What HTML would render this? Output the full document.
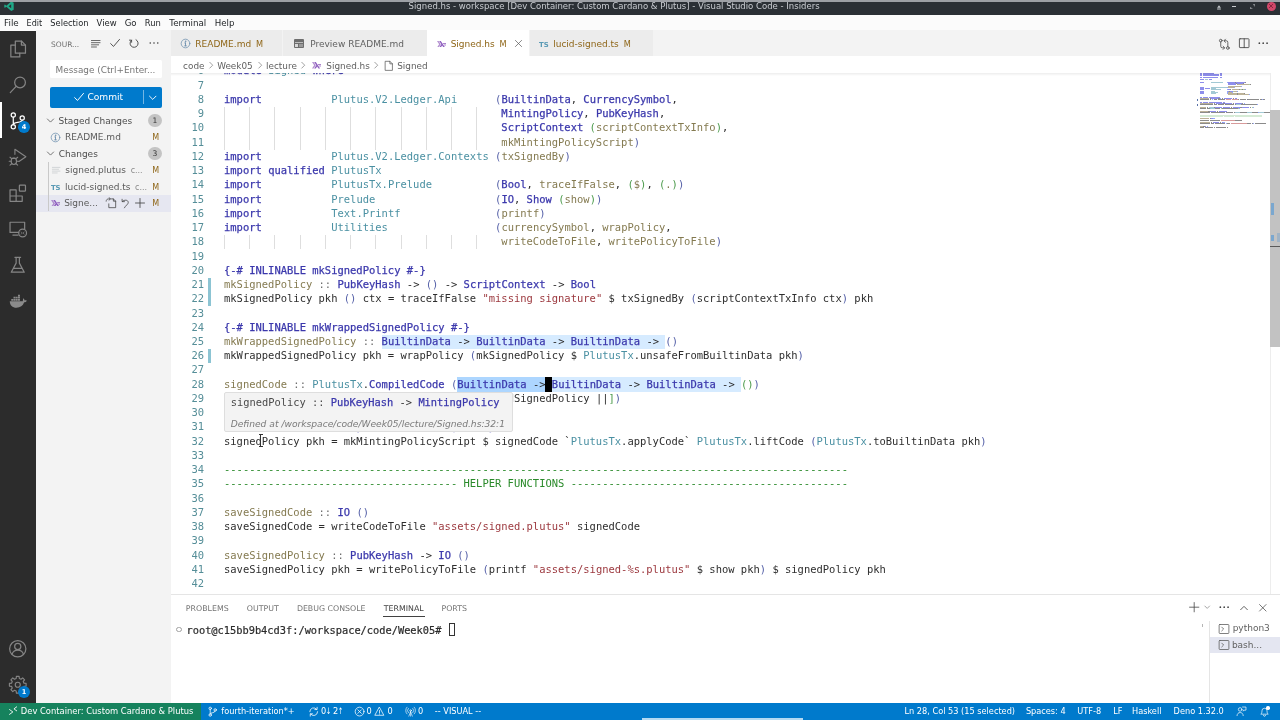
<!DOCTYPE html>
<html lang="en">
<head>
<meta charset="utf-8">
<title>Signed.hs - workspace [Dev Container: Custom Cardano &amp; Plutus] - Visual Studio Code - Insiders</title>
<style>
*{box-sizing:border-box;margin:0;padding:0}
html,body{width:1280px;height:720px;overflow:hidden;background:#fff}
body{will-change:transform;position:relative;font-family:"DejaVu Sans","Liberation Sans",sans-serif;font-size:9px;color:#616161}
.abs{position:absolute}
.t{position:absolute;line-height:20px;height:20px;white-space:pre}
#frame{left:0;top:0;width:1280px;height:1.9px;background:#9da0a5}
#title{left:0;top:2px;width:1280px;height:12.6px;background:#2b3035;color:#c9ccd1;font-size:9.3px;line-height:12px;text-align:center;white-space:nowrap}
#menu{left:0;top:14.6px;width:1280px;height:16px;background:#fbfbfb;color:#232629;font-size:9.6px;line-height:16px;white-space:nowrap}
#act{left:0;top:30.8px;width:36px;height:671.9px;background:#2c2c2c}
#side{left:36px;top:30.4px;width:135px;height:672.3px;background:#f3f3f3}
#tabs{left:171px;top:30.4px;width:1109px;height:25.3px;background:#f3f3f3}
#bc{left:171px;top:55.7px;width:1109px;height:17px;background:#fff;font-size:9.3px;line-height:19px;color:#616161;white-space:nowrap}
#ed{left:171px;top:72.7px;width:1109px;height:521.5px;background:#fff;overflow:hidden}
#edin{position:absolute;left:-171px;top:-72.7px;width:1280px;height:720px}
.cl,.ln{position:absolute;font-family:"DejaVu Sans Mono","Liberation Mono",monospace;font-size:10.470px;line-height:14.242px;height:14.242px;white-space:pre;color:#2e2e2e}
.cl{left:224px}
.ln{left:171px;width:33px;text-align:right;color:#558e98}
.k{color:#3b38ac;-webkit-text-stroke:0.25px #3b38ac}.m{color:#4a90a2}.f{color:#847a50}.s{color:#9c383e}.d{color:#6e6e6e}.c{color:#2a8a2a}
.b1{color:#5560a8}.b2{color:#4a9a4a}.b3{color:#7b3814}.o{color:#2a2a2a}
.ig{position:absolute;width:1px;background:#dedede}
.sel{position:absolute;background:#add6ff}
.selh{position:absolute;background:#d6ebff}
.cur{position:absolute;background:#000}
#panel{left:171px;top:594px;width:1109px;height:108px;background:#fff;border-top:1px solid #e5e5e5}
#status{left:0;top:702.7px;width:1280px;height:17.3px;background:#007acc;color:#fff;font-size:9px;line-height:18px;white-space:nowrap}
#remote{left:0;top:0;width:201px;height:17.3px;background:#16825d}
#mm i{position:absolute;height:1.0px;opacity:.85}
</style>
</head>
<body>
<div id="title" class="abs"><span class="t" style="left:408.60px;top:-6.24px;font-size:8.53px;color:#c9ccd1;">Signed.hs - workspace [Dev Container: Custom Cardano &amp; Plutus] - Visual Studio Code - Insiders</span></div>
<div id="menu" class="abs"><span class="t" style="left:4.10px;top:-1.44px;font-size:8.78px;color:#232629;">File</span>
<span class="t" style="left:26.60px;top:-0.44px;font-size:8.06px;color:#232629;">Edit</span>
<span class="t" style="left:50.30px;top:-1.44px;font-size:8.29px;color:#232629;">Selection</span>
<span class="t" style="left:96.60px;top:-1.44px;font-size:8.47px;color:#232629;">View</span>
<span class="t" style="left:124.70px;top:-1.44px;font-size:8.58px;color:#232629;">Go</span>
<span class="t" style="left:144.80px;top:-1.44px;font-size:8.40px;color:#232629;">Run</span>
<span class="t" style="left:169.30px;top:-1.44px;font-size:8.76px;color:#232629;">Terminal</span>
<span class="t" style="left:214.70px;top:-1.44px;font-size:8.64px;color:#232629;">Help</span></div>
<div id="act" class="abs"><!--ACT--></div>
<div id="side" class="abs"><span class="t" style="left:15.00px;top:4.64px;font-size:7.51px;color:#6f6f6f;">SOUR...</span>
<div class="abs" style="left:14.40px;top:29.70px;width:111.70px;height:18.10px;background:#ffffff;border-radius:1.5px"></div>
<span class="t" style="left:19.52px;top:29.16px;font-size:8.90px;color:#767676;">Message (Ctrl+Enter...</span>
<div class="abs" style="left:14.20px;top:56.70px;width:111.90px;height:20.60px;background:#007acc;border-radius:2px"></div>
<div class="abs" style="left:106.60px;top:60.10px;width:0.80px;height:14.00px;background:rgba(255,255,255,.45);"></div>
<span class="t" style="left:51.38px;top:56.96px;font-size:9.10px;color:#ffffff;">Commit</span>
<div class="abs" style="left:0.00px;top:164.60px;width:135.00px;height:16.70px;background:#e6e7f1;"></div>
<div class="abs" style="left:12.20px;top:131.60px;width:0.80px;height:49.50px;background:#c9c9c9;"></div>
<span class="t" style="left:22.59px;top:80.46px;font-size:9.00px;color:#4d4d4d;">Staged Changes</span>
<span class="t" style="left:29.04px;top:96.96px;font-size:9.00px;color:#5a5a5a;">README.md</span>
<span class="t" style="left:22.68px;top:113.46px;font-size:9.00px;color:#4d4d4d;">Changes</span>
<span class="t" style="left:29.32px;top:129.96px;font-size:9.00px;color:#5a5a5a;">signed.plutus</span>
<span class="t" style="left:94.64px;top:130.96px;font-size:8.00px;color:#8a8a8a;">c...</span>
<span class="t" style="left:28.98px;top:146.46px;font-size:9.00px;color:#5a5a5a;">lucid-signed.ts</span>
<span class="t" style="left:99.09px;top:147.46px;font-size:8.00px;color:#8a8a8a;">c...</span>
<span class="t" style="left:28.17px;top:162.96px;font-size:9.00px;color:#5a5a5a;">Signe...</span>
<span class="t" style="left:116.15px;top:97.96px;font-size:8.00px;color:#8f6618;">M</span>
<span class="t" style="left:116.15px;top:130.96px;font-size:8.00px;color:#8f6618;">M</span>
<span class="t" style="left:116.15px;top:147.46px;font-size:8.00px;color:#8f6618;">M</span>
<span class="t" style="left:116.15px;top:163.96px;font-size:8.00px;color:#8f6618;">M</span>
<div class="abs" style="left:112.25px;top:83.55px;width:13.50px;height:13.50px;background:#c4c4c4;border-radius:50%"></div>
<span class="t" style="left:116.58px;top:81.07px;font-size:7.60px;color:#333333;">1</span>
<div class="abs" style="left:112.25px;top:116.55px;width:13.50px;height:13.50px;background:#c4c4c4;border-radius:50%"></div>
<span class="t" style="left:116.58px;top:114.07px;font-size:7.60px;color:#333333;">3</span></div>
<div id="tabs" class="abs"><div class="abs" style="left:0.00px;top:0.00px;width:110.50px;height:25.30px;background:#ececec;"></div>
<div class="abs" style="left:111.50px;top:0.00px;width:144.00px;height:25.30px;background:#ececec;"></div>
<div class="abs" style="left:256.00px;top:0.00px;width:102.00px;height:25.30px;background:#ffffff;"></div>
<div class="abs" style="left:359.00px;top:0.00px;width:122.50px;height:25.30px;background:#ececec;"></div>
<span class="t" style="left:24.34px;top:3.76px;font-size:9.00px;color:#8f6618;">README.md</span>
<span class="t" style="left:85.11px;top:3.76px;font-size:8.20px;color:#8f6618;">M</span>
<span class="t" style="left:139.24px;top:3.76px;font-size:9.00px;color:#616161;">Preview README.md</span>
<span class="t" style="left:279.63px;top:3.76px;font-size:9.00px;color:#8f6618;">Signed.hs</span>
<span class="t" style="left:328.51px;top:3.76px;font-size:8.20px;color:#8f6618;">M</span>
<span class="t" style="left:382.23px;top:3.76px;font-size:9.00px;color:#8f6618;">lucid-signed.ts</span>
<span class="t" style="left:452.86px;top:3.76px;font-size:8.20px;color:#8f6618;">M</span></div>
<div id="bc" class="abs"><span class="t" style="left:12.12px;top:-0.04px;font-size:8.90px;">code</span>
<span class="t" style="left:46.15px;top:-0.04px;font-size:8.90px;">Week05</span>
<span class="t" style="left:95.04px;top:-0.04px;font-size:8.90px;">lecture</span>
<span class="t" style="left:155.33px;top:-0.04px;font-size:8.90px;">Signed.hs</span>
<span class="t" style="left:226.18px;top:-0.04px;font-size:8.90px;">Signed</span></div>
<div id="ed" class="abs"><div id="edin">
<div class="selh" style="left:381.59px;top:334.71px;width:283.66px;height:14.24px"></div>
<div class="sel" style="left:457.23px;top:377.44px;width:94.55px;height:14.24px"></div>
<div class="selh" style="left:551.78px;top:377.44px;width:189.10px;height:14.24px"></div>
<div class="cur" style="left:545.48px;top:377.44px;width:6.30px;height:14.24px"></div>
<div class="ig" style="left:224.00px;top:106.84px;height:42.73px"></div>
<div class="ig" style="left:249.21px;top:106.84px;height:42.73px"></div>
<div class="ig" style="left:274.43px;top:106.84px;height:42.73px"></div>
<div class="ig" style="left:299.64px;top:106.84px;height:42.73px"></div>
<div class="ig" style="left:324.86px;top:106.84px;height:42.73px"></div>
<div class="ig" style="left:350.07px;top:106.84px;height:42.73px"></div>
<div class="ig" style="left:375.28px;top:106.84px;height:42.73px"></div>
<div class="ig" style="left:400.50px;top:106.84px;height:42.73px"></div>
<div class="ig" style="left:425.71px;top:106.84px;height:42.73px"></div>
<div class="ig" style="left:450.93px;top:106.84px;height:42.73px"></div>
<div class="ig" style="left:476.14px;top:106.84px;height:42.73px"></div>
<div class="ig" style="left:224.00px;top:235.02px;height:14.24px"></div>
<div class="ig" style="left:249.21px;top:235.02px;height:14.24px"></div>
<div class="ig" style="left:274.43px;top:235.02px;height:14.24px"></div>
<div class="ig" style="left:299.64px;top:235.02px;height:14.24px"></div>
<div class="ig" style="left:324.86px;top:235.02px;height:14.24px"></div>
<div class="ig" style="left:350.07px;top:235.02px;height:14.24px"></div>
<div class="ig" style="left:375.28px;top:235.02px;height:14.24px"></div>
<div class="ig" style="left:400.50px;top:235.02px;height:14.24px"></div>
<div class="ig" style="left:425.71px;top:235.02px;height:14.24px"></div>
<div class="ig" style="left:450.93px;top:235.02px;height:14.24px"></div>
<div class="ig" style="left:476.14px;top:235.02px;height:14.24px"></div>
<div class="ln" style="top:62.88px">6</div>
<div class="cl" style="top:62.88px"><span class="k">module</span> <span class="m">Signed</span> <span class="k">where</span></div>
<div class="ln" style="top:77.88px">7</div>
<div class="ln" style="top:91.88px">8</div>
<div class="cl" style="top:91.88px"><span class="k">import</span>           <span class="m">Plutus.V2.Ledger.Api</span>      <span class="b1">(</span><span class="k">BuiltinData</span>, <span class="k">CurrencySymbol</span>,</div>
<div class="ln" style="top:105.88px">9</div>
<div class="cl" style="top:105.88px">                                            <span class="k">MintingPolicy</span>, <span class="k">PubKeyHash</span>,</div>
<div class="ln" style="top:119.88px">10</div>
<div class="cl" style="top:119.88px">                                            <span class="k">ScriptContext</span> <span class="b2">(</span><span class="f">scriptContextTxInfo</span><span class="b2">)</span>,</div>
<div class="ln" style="top:134.88px">11</div>
<div class="cl" style="top:134.88px">                                            <span class="f">mkMintingPolicyScript</span><span class="b1">)</span></div>
<div class="ln" style="top:148.88px">12</div>
<div class="cl" style="top:148.88px"><span class="k">import</span>           <span class="m">Plutus.V2.Ledger.Contexts</span> <span class="b1">(</span><span class="f">txSignedBy</span><span class="b1">)</span></div>
<div class="ln" style="top:162.88px">13</div>
<div class="cl" style="top:162.88px"><span class="k">import</span> <span class="k">qualified</span> <span class="m">PlutusTx</span></div>
<div class="ln" style="top:176.88px">14</div>
<div class="cl" style="top:176.88px"><span class="k">import</span>           <span class="m">PlutusTx.Prelude</span>          <span class="b1">(</span><span class="k">Bool</span>, <span class="f">traceIfFalse</span>, <span class="b2">(</span><span class="f">$</span><span class="b2">)</span>, <span class="b2">(</span><span class="f">.</span><span class="b2">)</span><span class="b1">)</span></div>
<div class="ln" style="top:191.88px">15</div>
<div class="cl" style="top:191.88px"><span class="k">import</span>           <span class="m">Prelude</span>                   <span class="b1">(</span><span class="k">IO</span>, <span class="k">Show</span> <span class="b2">(</span><span class="f">show</span><span class="b2">)</span><span class="b1">)</span></div>
<div class="ln" style="top:205.88px">16</div>
<div class="cl" style="top:205.88px"><span class="k">import</span>           <span class="m">Text.Printf</span>               <span class="b1">(</span><span class="f">printf</span><span class="b1">)</span></div>
<div class="ln" style="top:219.88px">17</div>
<div class="cl" style="top:219.88px"><span class="k">import</span>           <span class="m">Utilities</span>                 <span class="b1">(</span><span class="f">currencySymbol</span>, <span class="f">wrapPolicy</span>,</div>
<div class="ln" style="top:233.88px">18</div>
<div class="cl" style="top:233.88px">                                            <span class="f">writeCodeToFile</span>, <span class="f">writePolicyToFile</span><span class="b1">)</span></div>
<div class="ln" style="top:248.88px">19</div>
<div class="ln" style="top:262.88px">20</div>
<div class="cl" style="top:262.88px"><span class="k">{-# INLINABLE mkSignedPolicy #-}</span></div>
<div class="ln" style="top:276.88px">21</div>
<div class="cl" style="top:276.88px"><span class="f">mkSignedPolicy</span> <span class="d">::</span> <span class="k">PubKeyHash</span> <span class="o">-&gt;</span> <span class="b1">()</span> <span class="o">-&gt;</span> <span class="k">ScriptContext</span> <span class="o">-&gt;</span> <span class="k">Bool</span></div>
<div class="ln" style="top:290.88px">22</div>
<div class="cl" style="top:290.88px">mkSignedPolicy pkh <span class="b1">()</span> ctx = traceIfFalse <span class="s">&quot;missing signature&quot;</span> $ txSignedBy <span class="b1">(</span>scriptContextTxInfo ctx<span class="b1">)</span> pkh</div>
<div class="ln" style="top:305.88px">23</div>
<div class="ln" style="top:319.88px">24</div>
<div class="cl" style="top:319.88px"><span class="k">{-# INLINABLE mkWrappedSignedPolicy #-}</span></div>
<div class="ln" style="top:333.88px">25</div>
<div class="cl" style="top:333.88px"><span class="f">mkWrappedSignedPolicy</span> <span class="d">::</span> <span class="k">BuiltinData</span> <span class="o">-&gt;</span> <span class="k">BuiltinData</span> <span class="o">-&gt;</span> <span class="k">BuiltinData</span> <span class="o">-&gt;</span> <span class="b1">()</span></div>
<div class="ln" style="top:347.88px">26</div>
<div class="cl" style="top:347.88px">mkWrappedSignedPolicy pkh = wrapPolicy <span class="b1">(</span>mkSignedPolicy $ <span class="m">PlutusTx</span>.unsafeFromBuiltinData pkh<span class="b1">)</span></div>
<div class="ln" style="top:361.88px">27</div>
<div class="ln" style="top:376.88px">28</div>
<div class="cl" style="top:376.88px"><span class="f">signedCode</span> <span class="d">::</span> <span class="m">PlutusTx</span>.<span class="k">CompiledCode</span> <span class="b1">(</span><span class="k">BuiltinData</span> <span class="o">-&gt;</span> <span class="k">BuiltinData</span> <span class="o">-&gt;</span> <span class="k">BuiltinData</span> <span class="o">-&gt;</span> <span class="b2">()</span><span class="b1">)</span></div>
<div class="ln" style="top:390.88px">29</div>
<div class="cl" style="top:390.88px">signedCode = $$<span class="b1">(</span><span class="m">PlutusTx</span>.compile <span class="b2">[</span>|| mkWrappedSignedPolicy ||<span class="b2">]</span><span class="b1">)</span></div>
<div class="ln" style="top:404.88px">30</div>
<div class="ln" style="top:418.88px">31</div>
<div class="cl" style="top:418.88px"><span class="f">signedPolicy</span> <span class="d">::</span> <span class="k">PubKeyHash</span> <span class="o">-&gt;</span> <span class="k">MintingPolicy</span></div>
<div class="ln" style="top:433.88px">32</div>
<div class="cl" style="top:433.88px">signedPolicy pkh = mkMintingPolicyScript $ signedCode `<span class="m">PlutusTx</span>.applyCode` <span class="m">PlutusTx</span>.liftCode <span class="b1">(</span><span class="m">PlutusTx</span>.toBuiltinData pkh<span class="b1">)</span></div>
<div class="ln" style="top:447.88px">33</div>
<div class="ln" style="top:461.88px">34</div>
<div class="cl" style="top:461.88px"><span class="c">---------------------------------------------------------------------------------------------------</span></div>
<div class="ln" style="top:475.88px">35</div>
<div class="cl" style="top:475.88px"><span class="c">------------------------------------- HELPER FUNCTIONS --------------------------------------------</span></div>
<div class="ln" style="top:490.88px">36</div>
<div class="ln" style="top:504.88px">37</div>
<div class="cl" style="top:504.88px"><span class="f">saveSignedCode</span> <span class="d">::</span> <span class="k">IO</span> <span class="b1">()</span></div>
<div class="ln" style="top:518.88px">38</div>
<div class="cl" style="top:518.88px">saveSignedCode = writeCodeToFile <span class="s">&quot;assets/signed.plutus&quot;</span> signedCode</div>
<div class="ln" style="top:532.88px">39</div>
<div class="ln" style="top:547.88px">40</div>
<div class="cl" style="top:547.88px"><span class="f">saveSignedPolicy</span> <span class="d">::</span> <span class="k">PubKeyHash</span> <span class="o">-&gt;</span> <span class="k">IO</span> <span class="b1">()</span></div>
<div class="ln" style="top:561.88px">41</div>
<div class="cl" style="top:561.88px">saveSignedPolicy pkh = writePolicyToFile <span class="b1">(</span>printf <span class="s">&quot;assets/signed-%s.plutus&quot;</span> $ show pkh<span class="b1">)</span> $ signedPolicy pkh</div>
<div class="ln" style="top:575.88px">42</div>
<div class="abs" style="left:224.10px;top:392.30px;width:289.20px;height:40.00px;background:#f3f3f3;border:0.8px solid #dedede;border-radius:2px"></div>
<span class="t" style="left:230.70px;top:392.06px;font-size:10.39px;color:#4a4a4a;font-family:'DejaVu Sans Mono',monospace;">signedPolicy ::</span>
<span class="t" style="left:330.80px;top:392.06px;font-size:10.39px;color:#3b38ac;font-family:'DejaVu Sans Mono',monospace;-webkit-text-stroke:0.25px #3b38ac;">PubKeyHash</span>
<span class="t" style="left:399.61px;top:392.06px;font-size:10.39px;color:#333;font-family:'DejaVu Sans Mono',monospace;">-&gt;</span>
<span class="t" style="left:418.38px;top:392.06px;font-size:10.39px;color:#3b38ac;font-family:'DejaVu Sans Mono',monospace;-webkit-text-stroke:0.25px #3b38ac;">MintingPolicy</span>
<span class="t" style="left:230.70px;top:413.76px;font-size:9.14px;color:#7a7a7a;font-style:italic;">Defined at /workspace/code/Week05/lecture/Signed.hs:32:1</span>
</div></div>
<div id="mm" class="abs" style="left:1200.2px;top:72.9px;width:70px;height:70px"><i style="left:0.00px;top:0.00px;width:1.88px;background:#7a7ae8"></i><i style="left:2.51px;top:0.00px;width:5.02px;background:#7a7ae8"></i><i style="left:8.15px;top:0.00px;width:5.64px;background:#7a7ae8"></i><i style="left:19.44px;top:0.00px;width:1.88px;background:#7a7ae8"></i><i style="left:0.00px;top:1.26px;width:1.88px;background:#7a7ae8"></i><i style="left:2.51px;top:1.26px;width:5.02px;background:#7a7ae8"></i><i style="left:8.15px;top:1.26px;width:10.66px;background:#7a7ae8"></i><i style="left:19.44px;top:1.26px;width:1.88px;background:#7a7ae8"></i><i style="left:0.00px;top:2.52px;width:1.88px;background:#7a7ae8"></i><i style="left:2.51px;top:2.52px;width:5.02px;background:#7a7ae8"></i><i style="left:8.15px;top:2.52px;width:10.66px;background:#7a7ae8"></i><i style="left:19.44px;top:2.52px;width:1.88px;background:#7a7ae8"></i><i style="left:0.00px;top:3.79px;width:1.88px;background:#7a7ae8"></i><i style="left:2.51px;top:3.79px;width:5.02px;background:#7a7ae8"></i><i style="left:8.15px;top:3.79px;width:9.40px;background:#7a7ae8"></i><i style="left:19.44px;top:3.79px;width:1.88px;background:#7a7ae8"></i><i style="left:0.00px;top:6.31px;width:3.76px;background:#7a7ae8"></i><i style="left:4.39px;top:6.31px;width:3.76px;background:#93bfcc"></i><i style="left:8.78px;top:6.31px;width:3.13px;background:#7a7ae8"></i><i style="left:0.00px;top:8.83px;width:3.76px;background:#7a7ae8"></i><i style="left:10.66px;top:8.83px;width:12.54px;background:#93bfcc"></i><i style="left:26.96px;top:8.83px;width:0.63px;background:#8298fc"></i><i style="left:27.59px;top:8.83px;width:6.90px;background:#7a7ae8"></i><i style="left:34.48px;top:8.83px;width:0.63px;background:#777777"></i><i style="left:35.74px;top:8.83px;width:8.78px;background:#7a7ae8"></i><i style="left:44.52px;top:8.83px;width:0.63px;background:#777777"></i><i style="left:27.59px;top:10.10px;width:8.15px;background:#7a7ae8"></i><i style="left:35.74px;top:10.10px;width:0.63px;background:#777777"></i><i style="left:36.99px;top:10.10px;width:6.27px;background:#7a7ae8"></i><i style="left:43.26px;top:10.10px;width:0.63px;background:#777777"></i><i style="left:27.59px;top:11.36px;width:8.15px;background:#7a7ae8"></i><i style="left:36.37px;top:11.36px;width:0.63px;background:#98c998"></i><i style="left:36.99px;top:11.36px;width:11.91px;background:#b0a486"></i><i style="left:48.91px;top:11.36px;width:0.63px;background:#98c998"></i><i style="left:49.53px;top:11.36px;width:0.63px;background:#777777"></i><i style="left:27.59px;top:12.62px;width:13.17px;background:#b0a486"></i><i style="left:40.76px;top:12.62px;width:0.63px;background:#8298fc"></i><i style="left:0.00px;top:13.88px;width:3.76px;background:#7a7ae8"></i><i style="left:10.66px;top:13.88px;width:15.68px;background:#93bfcc"></i><i style="left:26.96px;top:13.88px;width:0.63px;background:#8298fc"></i><i style="left:27.59px;top:13.88px;width:6.27px;background:#b0a486"></i><i style="left:33.86px;top:13.88px;width:0.63px;background:#8298fc"></i><i style="left:0.00px;top:15.14px;width:3.76px;background:#7a7ae8"></i><i style="left:4.39px;top:15.14px;width:5.64px;background:#7a7ae8"></i><i style="left:10.66px;top:15.14px;width:5.02px;background:#93bfcc"></i><i style="left:0.00px;top:16.41px;width:3.76px;background:#7a7ae8"></i><i style="left:10.66px;top:16.41px;width:10.03px;background:#93bfcc"></i><i style="left:26.96px;top:16.41px;width:0.63px;background:#8298fc"></i><i style="left:27.59px;top:16.41px;width:2.51px;background:#7a7ae8"></i><i style="left:30.10px;top:16.41px;width:0.63px;background:#777777"></i><i style="left:31.35px;top:16.41px;width:7.52px;background:#b0a486"></i><i style="left:38.87px;top:16.41px;width:0.63px;background:#777777"></i><i style="left:40.13px;top:16.41px;width:0.63px;background:#98c998"></i><i style="left:40.76px;top:16.41px;width:0.63px;background:#b0a486"></i><i style="left:41.38px;top:16.41px;width:0.63px;background:#98c998"></i><i style="left:42.01px;top:16.41px;width:0.63px;background:#777777"></i><i style="left:43.26px;top:16.41px;width:0.63px;background:#98c998"></i><i style="left:43.89px;top:16.41px;width:0.63px;background:#b0a486"></i><i style="left:44.52px;top:16.41px;width:0.63px;background:#98c998"></i><i style="left:45.14px;top:16.41px;width:0.63px;background:#8298fc"></i><i style="left:0.00px;top:17.67px;width:3.76px;background:#7a7ae8"></i><i style="left:10.66px;top:17.67px;width:4.39px;background:#93bfcc"></i><i style="left:26.96px;top:17.67px;width:0.63px;background:#8298fc"></i><i style="left:27.59px;top:17.67px;width:1.25px;background:#7a7ae8"></i><i style="left:28.84px;top:17.67px;width:0.63px;background:#777777"></i><i style="left:30.10px;top:17.67px;width:2.51px;background:#7a7ae8"></i><i style="left:33.23px;top:17.67px;width:0.63px;background:#98c998"></i><i style="left:33.86px;top:17.67px;width:2.51px;background:#b0a486"></i><i style="left:36.37px;top:17.67px;width:0.63px;background:#98c998"></i><i style="left:36.99px;top:17.67px;width:0.63px;background:#8298fc"></i><i style="left:0.00px;top:18.93px;width:3.76px;background:#7a7ae8"></i><i style="left:10.66px;top:18.93px;width:6.90px;background:#93bfcc"></i><i style="left:26.96px;top:18.93px;width:0.63px;background:#8298fc"></i><i style="left:27.59px;top:18.93px;width:3.76px;background:#b0a486"></i><i style="left:31.35px;top:18.93px;width:0.63px;background:#8298fc"></i><i style="left:0.00px;top:20.19px;width:3.76px;background:#7a7ae8"></i><i style="left:10.66px;top:20.19px;width:5.64px;background:#93bfcc"></i><i style="left:26.96px;top:20.19px;width:0.63px;background:#8298fc"></i><i style="left:27.59px;top:20.19px;width:8.78px;background:#b0a486"></i><i style="left:36.37px;top:20.19px;width:0.63px;background:#777777"></i><i style="left:37.62px;top:20.19px;width:6.27px;background:#b0a486"></i><i style="left:43.89px;top:20.19px;width:0.63px;background:#777777"></i><i style="left:27.59px;top:21.45px;width:9.40px;background:#b0a486"></i><i style="left:36.99px;top:21.45px;width:0.63px;background:#777777"></i><i style="left:38.25px;top:21.45px;width:10.66px;background:#b0a486"></i><i style="left:48.91px;top:21.45px;width:0.63px;background:#8298fc"></i><i style="left:0.00px;top:23.98px;width:1.88px;background:#7a7ae8"></i><i style="left:2.51px;top:23.98px;width:5.64px;background:#7a7ae8"></i><i style="left:8.78px;top:23.98px;width:8.78px;background:#7a7ae8"></i><i style="left:18.18px;top:23.98px;width:1.88px;background:#7a7ae8"></i><i style="left:0.00px;top:25.24px;width:8.78px;background:#b0a486"></i><i style="left:9.40px;top:25.24px;width:1.25px;background:#777777"></i><i style="left:11.29px;top:25.24px;width:6.27px;background:#7a7ae8"></i><i style="left:18.18px;top:25.24px;width:1.25px;background:#777777"></i><i style="left:20.06px;top:25.24px;width:1.25px;background:#8298fc"></i><i style="left:21.95px;top:25.24px;width:1.25px;background:#777777"></i><i style="left:23.83px;top:25.24px;width:8.15px;background:#7a7ae8"></i><i style="left:32.60px;top:25.24px;width:1.25px;background:#777777"></i><i style="left:34.48px;top:25.24px;width:2.51px;background:#7a7ae8"></i><i style="left:0.00px;top:26.50px;width:8.78px;background:#777777"></i><i style="left:9.40px;top:26.50px;width:1.88px;background:#777777"></i><i style="left:11.91px;top:26.50px;width:1.25px;background:#8298fc"></i><i style="left:13.79px;top:26.50px;width:1.88px;background:#777777"></i><i style="left:16.30px;top:26.50px;width:0.63px;background:#777777"></i><i style="left:17.56px;top:26.50px;width:7.52px;background:#777777"></i><i style="left:25.71px;top:26.50px;width:5.02px;background:#d18a8a"></i><i style="left:31.35px;top:26.50px;width:6.27px;background:#d18a8a"></i><i style="left:38.25px;top:26.50px;width:0.63px;background:#777777"></i><i style="left:39.50px;top:26.50px;width:6.27px;background:#777777"></i><i style="left:46.40px;top:26.50px;width:0.63px;background:#8298fc"></i><i style="left:47.02px;top:26.50px;width:11.91px;background:#777777"></i><i style="left:59.56px;top:26.50px;width:1.88px;background:#777777"></i><i style="left:61.45px;top:26.50px;width:0.63px;background:#8298fc"></i><i style="left:62.70px;top:26.50px;width:1.88px;background:#777777"></i><i style="left:0.00px;top:29.03px;width:1.88px;background:#7a7ae8"></i><i style="left:2.51px;top:29.03px;width:5.64px;background:#7a7ae8"></i><i style="left:8.78px;top:29.03px;width:13.17px;background:#7a7ae8"></i><i style="left:22.57px;top:29.03px;width:1.88px;background:#7a7ae8"></i><i style="left:0.00px;top:30.29px;width:13.17px;background:#b0a486"></i><i style="left:13.79px;top:30.29px;width:1.25px;background:#777777"></i><i style="left:15.68px;top:30.29px;width:6.90px;background:#7a7ae8"></i><i style="left:23.20px;top:30.29px;width:1.25px;background:#777777"></i><i style="left:25.08px;top:30.29px;width:6.90px;background:#7a7ae8"></i><i style="left:32.60px;top:30.29px;width:1.25px;background:#777777"></i><i style="left:34.48px;top:30.29px;width:6.90px;background:#7a7ae8"></i><i style="left:42.01px;top:30.29px;width:1.25px;background:#777777"></i><i style="left:43.89px;top:30.29px;width:1.25px;background:#8298fc"></i><i style="left:0.00px;top:31.55px;width:13.17px;background:#777777"></i><i style="left:13.79px;top:31.55px;width:1.88px;background:#777777"></i><i style="left:16.30px;top:31.55px;width:0.63px;background:#777777"></i><i style="left:17.56px;top:31.55px;width:6.27px;background:#777777"></i><i style="left:24.45px;top:31.55px;width:0.63px;background:#8298fc"></i><i style="left:25.08px;top:31.55px;width:8.78px;background:#777777"></i><i style="left:34.48px;top:31.55px;width:0.63px;background:#777777"></i><i style="left:35.74px;top:31.55px;width:5.02px;background:#93bfcc"></i><i style="left:40.76px;top:31.55px;width:13.79px;background:#777777"></i><i style="left:55.18px;top:31.55px;width:1.88px;background:#777777"></i><i style="left:57.06px;top:31.55px;width:0.63px;background:#8298fc"></i><i style="left:0.00px;top:34.07px;width:6.27px;background:#b0a486"></i><i style="left:6.90px;top:34.07px;width:1.25px;background:#777777"></i><i style="left:8.78px;top:34.07px;width:5.02px;background:#93bfcc"></i><i style="left:13.79px;top:34.07px;width:0.63px;background:#777777"></i><i style="left:14.42px;top:34.07px;width:7.52px;background:#7a7ae8"></i><i style="left:22.57px;top:34.07px;width:0.63px;background:#8298fc"></i><i style="left:23.20px;top:34.07px;width:6.90px;background:#7a7ae8"></i><i style="left:30.72px;top:34.07px;width:1.25px;background:#777777"></i><i style="left:32.60px;top:34.07px;width:6.90px;background:#7a7ae8"></i><i style="left:40.13px;top:34.07px;width:1.25px;background:#777777"></i><i style="left:42.01px;top:34.07px;width:6.90px;background:#7a7ae8"></i><i style="left:49.53px;top:34.07px;width:1.25px;background:#777777"></i><i style="left:51.41px;top:34.07px;width:1.25px;background:#98c998"></i><i style="left:52.67px;top:34.07px;width:0.63px;background:#8298fc"></i><i style="left:0.00px;top:35.34px;width:6.27px;background:#777777"></i><i style="left:6.90px;top:35.34px;width:0.63px;background:#777777"></i><i style="left:8.15px;top:35.34px;width:1.25px;background:#777777"></i><i style="left:9.40px;top:35.34px;width:0.63px;background:#8298fc"></i><i style="left:10.03px;top:35.34px;width:5.02px;background:#93bfcc"></i><i style="left:15.05px;top:35.34px;width:5.02px;background:#777777"></i><i style="left:20.69px;top:35.34px;width:0.63px;background:#98c998"></i><i style="left:21.32px;top:35.34px;width:1.25px;background:#777777"></i><i style="left:23.20px;top:35.34px;width:13.17px;background:#777777"></i><i style="left:36.99px;top:35.34px;width:1.25px;background:#777777"></i><i style="left:38.25px;top:35.34px;width:0.63px;background:#98c998"></i><i style="left:38.87px;top:35.34px;width:0.63px;background:#8298fc"></i><i style="left:0.00px;top:37.86px;width:7.52px;background:#b0a486"></i><i style="left:8.15px;top:37.86px;width:1.25px;background:#777777"></i><i style="left:10.03px;top:37.86px;width:6.27px;background:#7a7ae8"></i><i style="left:16.93px;top:37.86px;width:1.25px;background:#777777"></i><i style="left:18.81px;top:37.86px;width:8.15px;background:#7a7ae8"></i><i style="left:0.00px;top:39.12px;width:7.52px;background:#777777"></i><i style="left:8.15px;top:39.12px;width:1.88px;background:#777777"></i><i style="left:10.66px;top:39.12px;width:0.63px;background:#777777"></i><i style="left:11.91px;top:39.12px;width:13.17px;background:#777777"></i><i style="left:25.71px;top:39.12px;width:0.63px;background:#777777"></i><i style="left:26.96px;top:39.12px;width:6.27px;background:#777777"></i><i style="left:33.86px;top:39.12px;width:0.63px;background:#777777"></i><i style="left:34.48px;top:39.12px;width:5.02px;background:#93bfcc"></i><i style="left:39.50px;top:39.12px;width:6.90px;background:#777777"></i><i style="left:47.02px;top:39.12px;width:5.02px;background:#93bfcc"></i><i style="left:52.04px;top:39.12px;width:5.64px;background:#777777"></i><i style="left:58.31px;top:39.12px;width:0.63px;background:#8298fc"></i><i style="left:58.94px;top:39.12px;width:5.02px;background:#93bfcc"></i><i style="left:63.95px;top:39.12px;width:8.78px;background:#777777"></i><i style="left:73.36px;top:39.12px;width:1.88px;background:#777777"></i><i style="left:75.24px;top:39.12px;width:0.63px;background:#8298fc"></i><i style="left:0.00px;top:41.65px;width:62.07px;background:#cfe8cf"></i><i style="left:0.00px;top:42.91px;width:23.20px;background:#cfe8cf"></i><i style="left:23.83px;top:42.91px;width:3.76px;background:#cfe8cf"></i><i style="left:28.21px;top:42.91px;width:5.64px;background:#cfe8cf"></i><i style="left:34.48px;top:42.91px;width:27.59px;background:#cfe8cf"></i><i style="left:0.00px;top:45.43px;width:8.78px;background:#b0a486"></i><i style="left:9.40px;top:45.43px;width:1.25px;background:#777777"></i><i style="left:11.29px;top:45.43px;width:1.25px;background:#7a7ae8"></i><i style="left:13.17px;top:45.43px;width:1.25px;background:#8298fc"></i><i style="left:0.00px;top:46.69px;width:8.78px;background:#777777"></i><i style="left:9.40px;top:46.69px;width:0.63px;background:#777777"></i><i style="left:10.66px;top:46.69px;width:9.40px;background:#777777"></i><i style="left:20.69px;top:46.69px;width:13.79px;background:#d18a8a"></i><i style="left:35.11px;top:46.69px;width:6.27px;background:#777777"></i><i style="left:0.00px;top:49.22px;width:10.03px;background:#b0a486"></i><i style="left:10.66px;top:49.22px;width:1.25px;background:#777777"></i><i style="left:12.54px;top:49.22px;width:6.27px;background:#7a7ae8"></i><i style="left:19.44px;top:49.22px;width:1.25px;background:#777777"></i><i style="left:21.32px;top:49.22px;width:1.25px;background:#7a7ae8"></i><i style="left:23.20px;top:49.22px;width:1.25px;background:#8298fc"></i><i style="left:0.00px;top:50.48px;width:10.03px;background:#777777"></i><i style="left:10.66px;top:50.48px;width:1.88px;background:#777777"></i><i style="left:13.17px;top:50.48px;width:0.63px;background:#777777"></i><i style="left:14.42px;top:50.48px;width:10.66px;background:#777777"></i><i style="left:25.71px;top:50.48px;width:0.63px;background:#8298fc"></i><i style="left:26.33px;top:50.48px;width:3.76px;background:#777777"></i><i style="left:30.72px;top:50.48px;width:15.68px;background:#d18a8a"></i><i style="left:47.02px;top:50.48px;width:0.63px;background:#777777"></i><i style="left:48.28px;top:50.48px;width:2.51px;background:#777777"></i><i style="left:51.41px;top:50.48px;width:1.88px;background:#777777"></i><i style="left:53.30px;top:50.48px;width:0.63px;background:#8298fc"></i><i style="left:54.55px;top:50.48px;width:0.63px;background:#777777"></i><i style="left:55.80px;top:50.48px;width:7.52px;background:#777777"></i><i style="left:63.95px;top:50.48px;width:1.88px;background:#777777"></i><i style="left:0.00px;top:53.00px;width:2.51px;background:#b0a486"></i><i style="left:3.13px;top:53.00px;width:1.25px;background:#777777"></i><i style="left:5.02px;top:53.00px;width:1.25px;background:#7a7ae8"></i><i style="left:6.90px;top:53.00px;width:1.25px;background:#8298fc"></i><i style="left:0.00px;top:54.27px;width:2.51px;background:#777777"></i><i style="left:3.13px;top:54.27px;width:0.63px;background:#777777"></i><i style="left:4.39px;top:54.27px;width:8.78px;background:#777777"></i><i style="left:13.79px;top:54.27px;width:1.25px;background:#777777"></i><i style="left:15.68px;top:54.27px;width:10.03px;background:#777777"></i><i style="left:26.33px;top:54.27px;width:1.88px;background:#777777"></i><i style="left:-3.2px;top:26.20px;width:1.2px;height:1.6px;background:#3d5a9a"></i><i style="left:-3.2px;top:31.25px;width:1.2px;height:1.6px;background:#3d5a9a"></i></div>
<div id="panel" class="abs"><span class="t" style="left:14.83px;top:4.26px;font-size:7.85px;color:#757575;">PROBLEMS</span>
<span class="t" style="left:75.75px;top:4.26px;font-size:7.85px;color:#757575;">OUTPUT</span>
<span class="t" style="left:125.88px;top:4.26px;font-size:7.85px;color:#757575;">DEBUG CONSOLE</span>
<span class="t" style="left:212.79px;top:4.26px;font-size:7.85px;color:#424242;">TERMINAL</span>
<span class="t" style="left:270.46px;top:4.26px;font-size:7.85px;color:#757575;">PORTS</span>
<div class="abs" style="left:212.00px;top:20.70px;width:41.50px;height:0.80px;background:#424242;"></div>
<span class="t" style="left:15.50px;top:25.06px;font-size:10.33px;color:#2a2a2a;font-family:'DejaVu Sans Mono',monospace;-webkit-text-stroke:0.2px #2a2a2a;">root@c15bb9b4cd3f:/workspace/code/Week05#</span>
<div class="abs" style="left:277.50px;top:28.30px;width:6.30px;height:12.60px;background:transparent;border:0.8px solid #333"></div>
<div class="abs" style="left:5.30px;top:31.70px;width:5.80px;height:5.80px;background:transparent;border:0.9px solid #a0a0a0;border-radius:50%"></div>
<div class="abs" style="left:1038.00px;top:26.00px;width:0.80px;height:82.00px;background:#e5e5e5;"></div>
<div class="abs" style="left:1038.80px;top:41.50px;width:70.20px;height:16.50px;background:#e4e6f1;"></div>
<span class="t" style="left:1061.65px;top:22.96px;font-size:9.00px;color:#616161;">python3</span>
<span class="t" style="left:1060.90px;top:39.56px;font-size:9.00px;color:#616161;">bash...</span></div>
<div id="status" class="abs"><div id="remote" class="abs"></div><span class="t" style="left:20.80px;top:-1.24px;font-size:8.37px;color:#ffffff;">Dev Container: Custom Cardano &amp; Plutus</span>
<span class="t" style="left:221.27px;top:-1.24px;font-size:8.20px;color:#ffffff;">fourth-iteration*+</span>
<span class="t" style="left:320.89px;top:-1.24px;font-size:8.20px;color:#ffffff;">0</span>
<span class="t" style="left:332.89px;top:-1.24px;font-size:8.20px;color:#ffffff;">2</span>
<span class="t" style="left:324.51px;top:-1.24px;font-size:8.80px;color:#ffffff;transform:scaleX(.7);">↓</span>
<span class="t" style="left:336.81px;top:-1.24px;font-size:8.80px;color:#ffffff;transform:scaleX(.7);">↑</span>
<span class="t" style="left:366.39px;top:-1.24px;font-size:8.20px;color:#ffffff;">0</span>
<span class="t" style="left:387.39px;top:-1.24px;font-size:8.20px;color:#ffffff;">0</span>
<span class="t" style="left:417.89px;top:-1.24px;font-size:8.20px;color:#ffffff;">0</span>
<span class="t" style="left:434.77px;top:-1.24px;font-size:8.20px;color:#ffffff;">-- VISUAL --</span>
<span class="t" style="left:904.48px;top:-1.24px;font-size:8.20px;color:#ffffff;">Ln 28, Col 53 (15 selected)</span>
<span class="t" style="left:1025.88px;top:-1.24px;font-size:8.20px;color:#ffffff;">Spaces: 4</span>
<span class="t" style="left:1077.35px;top:-1.24px;font-size:8.20px;color:#ffffff;">UTF-8</span>
<span class="t" style="left:1113.31px;top:-1.24px;font-size:8.20px;color:#ffffff;">LF</span>
<span class="t" style="left:1131.99px;top:-1.24px;font-size:8.20px;color:#ffffff;">Haskell</span>
<span class="t" style="left:1173.62px;top:-1.24px;font-size:8.20px;color:#ffffff;">Deno 1.32.0</span></div>
<svg class="abs" style="left:8.25px;top:38.95px;" width="19.50" height="19.50" viewBox="0 0 24 24"><g fill="none" stroke="#858585" stroke-width="1.5" stroke-linecap="round" stroke-linejoin="round" ><path d="M9 2.5h7.5l5 5V17.5H9z"/><path d="M16.5 2.5v5h5"/><path d="M9 7.5H3.5v14.5h11V17.5"/></g></svg>
<svg class="abs" style="left:8.25px;top:74.95px;" width="19.50" height="19.50" viewBox="0 0 24 24"><g fill="none" stroke="#858585" stroke-width="1.5" stroke-linecap="round" stroke-linejoin="round" ><circle cx="14.8" cy="9.2" r="6.6"/><path d="M10 14 2.8 21.6"/></g></svg>
<div class="abs" style="left:0.00px;top:102.00px;width:1.70px;height:36.30px;background:#ffffff;"></div>
<svg class="abs" style="left:8.25px;top:110.75px;" width="19.50" height="19.50" viewBox="0 0 24 24"><g fill="none" stroke="#ffffff" stroke-width="1.5" stroke-linecap="round" stroke-linejoin="round" ><circle cx="6.5" cy="5" r="2.6"/><circle cx="6.5" cy="19.5" r="2.6"/><circle cx="17.5" cy="8.5" r="2.6"/><path d="M6.5 7.6v9.3M17.5 11.1c0 4.5-11 1.5-11 5.8"/></g></svg>
<svg class="abs" style="left:8.25px;top:146.95px;" width="19.50" height="19.50" viewBox="0 0 24 24"><g fill="none" stroke="#858585" stroke-width="1.4" stroke-linecap="round" stroke-linejoin="round" ><path d="M8.5 9V2.8L22 12l-8.5 5.8"/><ellipse cx="7.2" cy="17.5" rx="3.3" ry="4"/><path d="M3.9 17.5H1.5M10.5 17.5h2.4M4.5 14.3 2.5 12.6M9.9 14.3l2-1.7M4.5 20.7l-2 1.6M9.9 20.7l2 1.6M5.4 14h3.6"/></g></svg>
<svg class="abs" style="left:8.25px;top:182.55px;" width="19.50" height="19.50" viewBox="0 0 24 24"><g fill="none" stroke="#858585" stroke-width="1.5" stroke-linecap="round" stroke-linejoin="round" ><path d="M2.5 8.5h7.5v7.5h-7.5zM2.5 16h7.5v6.5h-7.5zM10 16h7.5v6.5H10z"/><rect x="14" y="2.5" width="7.5" height="7.5" rx="0.8"/></g></svg>
<svg class="abs" style="left:8.25px;top:218.95px;" width="19.50" height="19.50" viewBox="0 0 24 24"><g fill="none" stroke="#858585" stroke-width="1.5" stroke-linecap="round" stroke-linejoin="round" ><path d="M13 16.5H2.5V4h18v8"/><path d="M6 19.8h6.5"/><circle cx="18" cy="17.3" r="4.8"/><path d="M16.3 16l1.2 1.3-1.2 1.3M19.8 16l-1.2 1.3 1.2 1.3" stroke-width="0.9"/></g></svg>
<svg class="abs" style="left:8.25px;top:254.75px;" width="19.50" height="19.50" viewBox="0 0 24 24"><g fill="none" stroke="#858585" stroke-width="1.5" stroke-linecap="round" stroke-linejoin="round" ><path d="M8.5 2.8h7M10 3v7L4 21.2h16L14 10V3M7 16.5h10"/></g></svg>
<svg class="abs" style="left:9.00px;top:292.00px;" width="18.00" height="18.00" viewBox="0 0 24 24"><g fill="#8a8a8a" stroke="none"><path d="M1 12.3h17.3c.6-1.600.2-3 .9-3.900 1 .8 1.500 1.900 1.500 3 1-.4 2.200-.3 3 .3-.7 1.500-2 2-3.500 2.100C18.500 18.700 15 21 10 21 4.500 21 1.300 17.800 1 12.300z"/><path d="M3 9.200h2.600v2.400H3zM6 9.200h2.600v2.400H6zM9 9.200h2.600v2.400H9zM12 9.200h2.600v2.400H12zM6 6.400h2.600v2.400H6zM9 6.400h2.600v2.400H9zM12 6.400h2.600v2.400H12zM12 3.600h2.600v2.400H12z"/></g></svg>
<svg class="abs" style="left:8.25px;top:638.95px;" width="19.50" height="19.50" viewBox="0 0 24 24"><g fill="none" stroke="#858585" stroke-width="1.5" stroke-linecap="round" stroke-linejoin="round" ><circle cx="12" cy="12" r="10"/><circle cx="12" cy="9.3" r="3.8"/><path d="M5 19c1-4 4-5.2 7-5.2s6 1.200 7 5.2"/></g></svg>
<svg class="abs" style="left:8.25px;top:675.15px;" width="19.50" height="19.50" viewBox="0 0 24 24"><g fill="none" stroke="#858585" stroke-width="1.4" stroke-linecap="round" stroke-linejoin="round" ><path d="M10.05 4.35 L10.34 1.73 L13.66 1.73 L13.95 4.35 L16.03 5.21 L18.09 3.57 L20.43 5.91 L18.79 7.97 L19.65 10.05 L22.27 10.34 L22.27 13.66 L19.65 13.95 L18.79 16.03 L20.43 18.09 L18.09 20.43 L16.03 18.79 L13.95 19.65 L13.66 22.27 L10.34 22.27 L10.05 19.65 L7.97 18.79 L5.91 20.43 L3.57 18.09 L5.21 16.03 L4.35 13.95 L1.73 13.66 L1.73 10.34 L4.35 10.05 L5.21 7.97 L3.57 5.91 L5.91 3.57 L7.97 5.21z"/><circle cx="12" cy="12" r="3.1"/></g></svg>
<div class="abs" style="left:18.20px;top:121.10px;width:11.60px;height:11.60px;background:#007acc;border-radius:50%"></div>
<span class="t" style="left:21.70px;top:117.41px;font-size:6.60px;color:#ffffff;font-weight:bold;">4</span>
<div class="abs" style="left:18.00px;top:685.70px;width:12.00px;height:12.00px;background:#007acc;border-radius:50%"></div>
<span class="t" style="left:21.70px;top:682.21px;font-size:6.60px;color:#ffffff;font-weight:bold;">1</span>
<svg class="abs" style="left:90.00px;top:37.50px;" width="11.50" height="11.50" viewBox="0 0 16 16"><g fill="none" stroke="#424242" stroke-width="1.1" stroke-linecap="round" stroke-linejoin="round" ><path d="M2 3.500h12M2 6.500h12M2 9.500h10M2 12.500h7"/></g></svg>
<svg class="abs" style="left:108.80px;top:37.20px;" width="12.00" height="12.00" viewBox="0 0 16 16"><g fill="none" stroke="#424242" stroke-width="1.2" stroke-linecap="round" stroke-linejoin="round" ><path d="M2.200 8.800 6 12.600 14 3.200"/></g></svg>
<svg class="abs" style="left:128.00px;top:37.20px;" width="12.00" height="12.00" viewBox="0 0 16 16"><g fill="none" stroke="#424242" stroke-width="1.2" stroke-linecap="round" stroke-linejoin="round" ><path d="M10.700 3.600A5.400 5.400 0 1 1 4.600 4.200"/><path d="M2 4.200H4.800V7"/></g></svg>
<svg color="#424242" class="abs" style="left:147.50px;top:37.40px;" width="12.00" height="12.00" viewBox="0 0 16 16"><g fill="none" stroke="#424242" stroke-width="1.2" stroke-linecap="round" stroke-linejoin="round" ><g stroke="none" fill="currentColor"><circle cx="3" cy="8" r="1.100"/><circle cx="8" cy="8" r="1.100"/><circle cx="13" cy="8" r="1.100"/></g></g></svg>
<svg class="abs" style="left:72.80px;top:91.40px;" width="12.00" height="12.00" viewBox="0 0 16 16"><g fill="none" stroke="#ffffff" stroke-width="1.3" stroke-linecap="round" stroke-linejoin="round" ><path d="M2.200 8.800 6 12.600 14 3.200"/></g></svg>
<svg class="abs" style="left:146.60px;top:92.00px;" width="11.50" height="11.50" viewBox="0 0 16 16"><g fill="none" stroke="#ffffff" stroke-width="1.3" stroke-linecap="round" stroke-linejoin="round" ><path d="M3.500 5.800 8 10.300 12.500 5.800"/></g></svg>
<svg class="abs" style="left:45.40px;top:115.10px;" width="11.00" height="11.00" viewBox="0 0 16 16"><g fill="none" stroke="#5a5a5a" stroke-width="1.2" stroke-linecap="round" stroke-linejoin="round" ><path d="M3.500 5.800 8 10.300 12.500 5.800"/></g></svg>
<svg class="abs" style="left:45.40px;top:148.10px;" width="11.00" height="11.00" viewBox="0 0 16 16"><g fill="none" stroke="#5a5a5a" stroke-width="1.2" stroke-linecap="round" stroke-linejoin="round" ><path d="M3.500 5.800 8 10.300 12.500 5.800"/></g></svg>
<svg color="#6d8fae" class="abs" style="left:49.60px;top:131.60px;" width="11.00" height="11.00" viewBox="0 0 16 16"><g fill="none" stroke="#6d8fae" stroke-width="1.1" stroke-linecap="round" stroke-linejoin="round" ><circle cx="8" cy="8" r="6.300"/><path d="M8 7.200v4.200M6.800 11.400h2.400M7 7.200h1" stroke-width="1.300"/><circle cx="8" cy="4.700" r="0.500" fill="currentColor"/></g></svg>
<svg class="abs" style="left:50.60px;top:164.70px;" width="11.00" height="11.00" viewBox="0 0 16 16"><g fill="none" stroke="#c3c7cb" stroke-width="1.0" stroke-linecap="round" stroke-linejoin="round" ><path d="M2 3.500h11M2 6.200h9M2 8.900h11M2 11.600h7"/></g></svg>
<span class="t" style="left:50.91px;top:177.86px;font-size:6.90px;color:#5a9ab5;font-weight:bold;">TS</span>
<svg class="abs" style="left:50.50px;top:199.60px;" width="9.70" height="6.85" viewBox="0 0 17 12"><g stroke="none"><path d="M0 12 4 6 0 0h3l4 6-4 6z" fill="#a074c4" opacity=".8"/><path d="M4 12 8 6 4 0h3l8 12h-3l-2.500-3.750L7 12z" fill="#8f5fc0"/><path d="M13.670 8.500 12.330 6.500H17v2zM11.670 5.500 10.330 3.500H17v2z" fill="#a074c4" opacity=".9"/></g></svg>
<svg class="abs" style="left:104.80px;top:197.00px;" width="12.20" height="12.20" viewBox="0 0 16 16"><g fill="none" stroke="#424242" stroke-width="1.0" stroke-linecap="round" stroke-linejoin="round" ><path d="M8.500 2.500h2.500l3 3v8.500H5V9"/><path d="M11 2.500v3h3"/><path d="M1.500 5.500C1.500 3.500 3 2.500 5 2.500h2M5.300 0.800 7.200 2.500 5.300 4.200"/></g></svg>
<svg class="abs" style="left:119.80px;top:197.50px;" width="11.20" height="11.20" viewBox="0 0 16 16"><g fill="none" stroke="#424242" stroke-width="1.1" stroke-linecap="round" stroke-linejoin="round" ><path d="M3.500 4.800C6 2.300 11.500 2.300 11.800 6.200 12 9 8 10.500 6.300 14"/><path d="M3 1.800V5.200H6.400"/></g></svg>
<svg class="abs" style="left:134.00px;top:197.20px;" width="12.00" height="12.00" viewBox="0 0 16 16"><g fill="none" stroke="#424242" stroke-width="1.1" stroke-linecap="round" stroke-linejoin="round" ><path d="M8 2v12M2 8h12"/></g></svg>
<svg color="#6d8fae" class="abs" style="left:180.00px;top:38.40px;" width="11.00" height="11.00" viewBox="0 0 16 16"><g fill="none" stroke="#6d8fae" stroke-width="1.1" stroke-linecap="round" stroke-linejoin="round" ><circle cx="8" cy="8" r="6.300"/><path d="M8 7.200v4.200M6.800 11.400h2.400M7 7.200h1" stroke-width="1.300"/><circle cx="8" cy="4.700" r="0.500" fill="currentColor"/></g></svg>
<div class="abs" style="left:294.00px;top:39.10px;width:10.20px;height:8.70px;background:#6e6e6e;border-radius:1px"></div>
<div class="abs" style="left:295.20px;top:41.60px;width:7.80px;height:0.80px;background:#bdbdbd;"></div>
<div class="abs" style="left:295.20px;top:43.60px;width:3.20px;height:3.00px;background:#d8d8d8;"></div>
<div class="abs" style="left:299.40px;top:43.60px;width:3.60px;height:3.00px;background:#9a9a9a;"></div>
<svg class="abs" style="left:437.00px;top:40.70px;" width="9.20" height="6.49" viewBox="0 0 17 12"><g stroke="none"><path d="M0 12 4 6 0 0h3l4 6-4 6z" fill="#a074c4" opacity=".8"/><path d="M4 12 8 6 4 0h3l8 12h-3l-2.500-3.750L7 12z" fill="#8f5fc0"/><path d="M13.670 8.500 12.330 6.500H17v2zM11.670 5.500 10.330 3.500H17v2z" fill="#a074c4" opacity=".9"/></g></svg>
<svg class="abs" style="left:512.60px;top:38.40px;" width="11.00" height="11.00" viewBox="0 0 16 16"><g fill="none" stroke="#555555" stroke-width="1.0" stroke-linecap="round" stroke-linejoin="round" ><path d="M3.500 3.500 12.500 12.500M12.500 3.500 3.500 12.500"/></g></svg>
<span class="t" style="left:539.06px;top:35.16px;font-size:6.90px;color:#5a9ab5;font-weight:bold;">TS</span>
<svg class="abs" style="left:1217.70px;top:37.60px;" width="12.60" height="12.60" viewBox="0 0 16 16"><g fill="none" stroke="#424242" stroke-width="1.0" stroke-linecap="round" stroke-linejoin="round" ><circle cx="3.500" cy="3.300" r="1.700"/><circle cx="12.500" cy="12.700" r="1.700"/><path d="M3.500 5v5.500a2 2 0 0 0 2 2h2.500M6.500 10.500l2 2-2 2M12.500 11V5.500a2 2 0 0 0-2-2H8M9.500 1.500l-2 2 2 2"/></g></svg>
<svg class="abs" style="left:1237.80px;top:37.00px;" width="12.40" height="12.40" viewBox="0 0 16 16"><g fill="none" stroke="#424242" stroke-width="1.1" stroke-linecap="round" stroke-linejoin="round" ><rect x="1.800" y="2.300" width="12.400" height="11.400" rx="0.800"/><path d="M8 2.300v11.400"/></g></svg>
<svg color="#424242" class="abs" style="left:1256.90px;top:37.20px;" width="12.40" height="12.40" viewBox="0 0 16 16"><g fill="none" stroke="#424242" stroke-width="1.2" stroke-linecap="round" stroke-linejoin="round" ><g stroke="none" fill="currentColor"><circle cx="3" cy="8" r="1.100"/><circle cx="8" cy="8" r="1.100"/><circle cx="13" cy="8" r="1.100"/></g></g></svg>
<svg class="abs" style="left:205.90px;top:60.30px;" width="10.40" height="10.40" viewBox="0 0 16 16"><g fill="none" stroke="#7a7a7a" stroke-width="1.1" stroke-linecap="round" stroke-linejoin="round" ><path d="M5.800 3.500 10.300 8 5.800 12.500"/></g></svg>
<svg class="abs" style="left:254.80px;top:60.30px;" width="10.40" height="10.40" viewBox="0 0 16 16"><g fill="none" stroke="#7a7a7a" stroke-width="1.1" stroke-linecap="round" stroke-linejoin="round" ><path d="M5.800 3.500 10.300 8 5.800 12.500"/></g></svg>
<svg class="abs" style="left:298.00px;top:60.30px;" width="10.40" height="10.40" viewBox="0 0 16 16"><g fill="none" stroke="#7a7a7a" stroke-width="1.1" stroke-linecap="round" stroke-linejoin="round" ><path d="M5.800 3.500 10.300 8 5.800 12.500"/></g></svg>
<svg class="abs" style="left:371.40px;top:60.30px;" width="10.40" height="10.40" viewBox="0 0 16 16"><g fill="none" stroke="#7a7a7a" stroke-width="1.1" stroke-linecap="round" stroke-linejoin="round" ><path d="M5.800 3.500 10.300 8 5.800 12.500"/></g></svg>
<svg class="abs" style="left:312.00px;top:62.30px;" width="9.20" height="6.49" viewBox="0 0 17 12"><g stroke="none"><path d="M0 12 4 6 0 0h3l4 6-4 6z" fill="#a074c4" opacity=".8"/><path d="M4 12 8 6 4 0h3l8 12h-3l-2.500-3.750L7 12z" fill="#8f5fc0"/><path d="M13.670 8.500 12.330 6.500H17v2zM11.670 5.500 10.330 3.500H17v2z" fill="#a074c4" opacity=".9"/></g></svg>
<svg class="abs" style="left:382.60px;top:59.60px;" width="11.60" height="11.60" viewBox="0 0 16 16"><g fill="none" stroke="#555555" stroke-width="1.0" stroke-linecap="round" stroke-linejoin="round" ><path d="M3.500 1.800h6l3.500 3.500v9H3.500z"/><path d="M9.500 1.800v3.500h3.500"/></g></svg>
<svg class="abs" style="left:1188.00px;top:601.30px;" width="12.40" height="12.40" viewBox="0 0 16 16"><g fill="none" stroke="#424242" stroke-width="1.0" stroke-linecap="round" stroke-linejoin="round" ><path d="M8 2v12M2 8h12"/></g></svg>
<svg class="abs" style="left:1202.60px;top:603.30px;" width="8.40" height="8.40" viewBox="0 0 16 16"><g fill="none" stroke="#7a7a7a" stroke-width="1.3" stroke-linecap="round" stroke-linejoin="round" ><path d="M3.500 5.800 8 10.300 12.500 5.800"/></g></svg>
<svg color="#424242" class="abs" style="left:1218.00px;top:601.30px;" width="12.40" height="12.40" viewBox="0 0 16 16"><g fill="none" stroke="#424242" stroke-width="1.2" stroke-linecap="round" stroke-linejoin="round" ><g stroke="none" fill="currentColor"><circle cx="3" cy="8" r="1.100"/><circle cx="8" cy="8" r="1.100"/><circle cx="13" cy="8" r="1.100"/></g></g></svg>
<svg class="abs" style="left:1237.80px;top:601.60px;" width="12.00" height="12.00" viewBox="0 0 16 16"><g fill="none" stroke="#424242" stroke-width="1.1" stroke-linecap="round" stroke-linejoin="round" ><path d="M3.500 10.300 8 5.800 12.500 10.300"/></g></svg>
<svg class="abs" style="left:1257.40px;top:601.50px;" width="11.60" height="11.60" viewBox="0 0 16 16"><g fill="none" stroke="#424242" stroke-width="1.0" stroke-linecap="round" stroke-linejoin="round" ><path d="M3.500 3.500 12.500 12.500M12.500 3.500 3.500 12.500"/></g></svg>
<svg class="abs" style="left:1217.60px;top:622.60px;" width="12.00" height="12.00" viewBox="0 0 16 16"><g fill="none" stroke="#555555" stroke-width="1.0" stroke-linecap="round" stroke-linejoin="round" ><rect x="1.500" y="2" width="13" height="12" rx="1"/><path d="M5 5.500 7.500 8 5 10.500"/></g></svg>
<svg class="abs" style="left:1217.60px;top:639.00px;" width="12.00" height="12.00" viewBox="0 0 16 16"><g fill="none" stroke="#555555" stroke-width="1.0" stroke-linecap="round" stroke-linejoin="round" ><rect x="1.500" y="2" width="13" height="12" rx="1"/><path d="M5 5.500 7.500 8 5 10.500"/></g></svg>
<div class="abs" style="left:1201.60px;top:624.40px;width:1.60px;height:2.60px;background:#b5b5b5;"></div>
<svg class="abs" style="left:8.60px;top:705.90px;" width="8.80" height="8.80" viewBox="0 0 16 16"><g fill="none" stroke="#ffffff" stroke-width="1.6" stroke-linecap="round" stroke-linejoin="round" ><path d="M1 6.500 7 10.800 1 15.200M15 0.800 9 5.200l6 4.300"/></g></svg>
<svg class="abs" style="left:207.20px;top:705.60px;" width="11.40" height="11.40" viewBox="0 0 16 16"><g fill="none" stroke="#ffffff" stroke-width="1.1" stroke-linecap="round" stroke-linejoin="round" ><circle cx="4.500" cy="3.300" r="1.700"/><circle cx="4.500" cy="12.700" r="1.700"/><circle cx="11.500" cy="5.500" r="1.700"/><path d="M4.500 5v6M11.500 7.200c0 3-7 1.500-7 4"/></g></svg>
<svg class="abs" style="left:307.50px;top:705.70px;" width="11.40" height="11.40" viewBox="0 0 16 16"><g fill="none" stroke="#ffffff" stroke-width="1.1" stroke-linecap="round" stroke-linejoin="round" ><path d="M2.500 8a5.500 5.500 0 0 1 9.800-3.300M13.500 8a5.500 5.500 0 0 1-9.800 3.300"/><path d="M12.800 1.800v3.200H9.600M3.200 14.200V11h3.200"/></g></svg>
<svg class="abs" style="left:354.00px;top:705.70px;" width="11.20" height="11.20" viewBox="0 0 16 16"><g fill="none" stroke="#ffffff" stroke-width="1.1" stroke-linecap="round" stroke-linejoin="round" ><circle cx="8" cy="8" r="6.300"/><path d="M5.500 5.500l5 5M10.500 5.500l-5 5"/></g></svg>
<svg class="abs" style="left:374.40px;top:705.70px;" width="11.00" height="11.00" viewBox="0 0 16 16"><g fill="none" stroke="#ffffff" stroke-width="1.1" stroke-linecap="round" stroke-linejoin="round" ><path d="M8 2 14.300 13.500H1.700z"/><path d="M8 6.500v3.500M8 11.600v.2"/></g></svg>
<svg class="abs" style="left:405.00px;top:705.70px;" width="11.20" height="11.20" viewBox="0 0 16 16"><g fill="none" stroke="#ffffff" stroke-width="0.9" stroke-linecap="round" stroke-linejoin="round" ><path d="M8 8v6.500M5.500 14.500 8 8l2.500 6.500"/><circle cx="8" cy="6.500" r="1.200"/><path d="M4.800 9.500a4.300 4.300 0 0 1 0-6M11.200 9.500a4.300 4.300 0 0 0 0-6M2.800 11.300a7 7 0 0 1 0-9.600M13.200 11.300a7 7 0 0 0 0-9.600"/></g></svg>
<svg class="abs" style="left:1236.00px;top:705.80px;" width="11.00" height="11.00" viewBox="0 0 16 16"><g fill="none" stroke="#ffffff" stroke-width="1.0" stroke-linecap="round" stroke-linejoin="round" ><circle cx="6" cy="5" r="2.600"/><path d="M1.500 14c.3-3 2-4.500 4.500-4.500S10.200 11 10.500 14"/><path d="M9.500 1.500h5v4.500h-2.500l-1.500 1.500V6"/></g></svg>
<svg class="abs" style="left:1258.50px;top:705.70px;" width="11.00" height="11.00" viewBox="0 0 16 16"><g fill="none" stroke="#ffffff" stroke-width="1.0" stroke-linecap="round" stroke-linejoin="round" ><path d="M3 11.500c1-1 1.300-2 1.300-4.500a3.700 3.700 0 0 1 7.400 0c0 2.500.3 3.500 1.300 4.500zM6.500 13.500a1.500 1.500 0 0 0 3 0"/></g></svg>
<div class="abs" style="left:1266.20px;top:706.30px;width:3.40px;height:3.40px;background:#ffffff;border-radius:50%"></div>
<div class="abs" style="left:642.00px;top:717.70px;width:161.00px;height:2.30px;background:#b3d9f2;"></div>
<svg class="abs" style="left:3.60px;top:0.70px;" width="10.00" height="10.40" viewBox="0 0 16 16"><g fill="#1fa888" stroke="none"><path d="M11.500 0.500 15.500 2.500v11l-4 2L3.800 8.800 1.500 10.600 0.500 10V6l1-.6 2.300 1.800zM11.500 4.800 7.300 8l4.200 3.200z"/></g></svg>
<svg class="abs" style="left:1215.50px;top:4.50px;" width="6.00" height="5.00" viewBox="0 0 16 16"><path d="M8 1 14 9H2zM2 11.500h12v2.500H2z" fill="#c9ccd1"/></svg>
<div class="abs" style="left:1231.70px;top:6.00px;width:4.60px;height:1.00px;background:#c9ccd1;"></div>
<svg class="abs" style="left:1249.80px;top:3.80px;" width="5.60" height="5.60" viewBox="0 0 16 16"><path d="M9 2h5v5M7 14H2V9" fill="none" stroke="#c9ccd1" stroke-width="2"/></svg>
<div class="abs" style="left:1266.60px;top:1.60px;width:9.40px;height:9.40px;background:#d2486a;border-radius:50%"></div>
<svg class="abs" style="left:1268.30px;top:3.30px;" width="6.00" height="6.00" viewBox="0 0 16 16"><g fill="none" stroke="#7a1f35" stroke-width="2.2" stroke-linecap="round" stroke-linejoin="round" ><path d="M3.500 3.500 12.500 12.500M12.500 3.500 3.500 12.500"/></g></svg>
<div class="abs" style="left:208.30px;top:277.75px;width:2.60px;height:28.48px;background:#8cc4d3;"></div>
<div class="abs" style="left:208.30px;top:348.96px;width:2.60px;height:14.24px;background:#8cc4d3;"></div>
<div class="abs" style="left:260.30px;top:434.50px;width:0.90px;height:12.50px;background:#333;"></div>
<div class="abs" style="left:258.60px;top:434.20px;width:4.40px;height:0.80px;background:#333;"></div>
<div class="abs" style="left:258.60px;top:446.40px;width:4.40px;height:0.80px;background:#333;"></div>
<div class="abs" style="left:171.00px;top:72.70px;width:1099.40px;height:3.00px;background:linear-gradient(rgba(0,0,0,.07),rgba(0,0,0,0));"></div>
<div class="abs" style="left:1270.40px;top:72.70px;width:9.60px;height:521.50px;background:#ffffff;border-left:0.8px solid #ededed"></div>
<div class="abs" style="left:1270.40px;top:110.20px;width:9.60px;height:237.30px;background:#c2c2c2;"></div>
<div class="abs" style="left:1270.80px;top:203.00px;width:3.00px;height:11.50px;background:#7aa7cf;"></div>
<div class="abs" style="left:1270.80px;top:234.50px;width:3.00px;height:6.00px;background:#7aa7cf;"></div>
<div class="abs" style="left:1270.40px;top:246.20px;width:9.60px;height:1.20px;background:#5a5a5a;"></div>
<div class="abs" style="left:1276.60px;top:233.00px;width:3.20px;height:9.00px;background:#9fb3c6;"></div>
<div id="frame" class="abs"></div>
</body>
</html>
